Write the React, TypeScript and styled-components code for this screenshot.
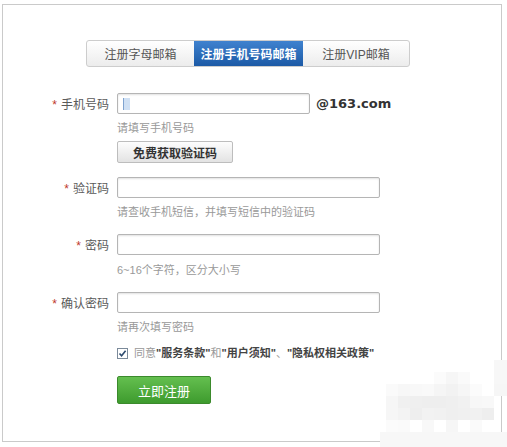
import React from "react";
import styled, { createGlobalStyle } from "styled-components";

const Global = createGlobalStyle`
  html, body { margin: 0; padding: 0; background: #fff; }
  body { font-family: "Liberation Sans", "Noto Sans CJK SC", sans-serif; font-size: 12px; color: #555; }
  * { box-sizing: border-box; }
`;

const Page = styled.div`
  position: relative;
  width: 507px;
  height: 447px;
  padding: 4px 5px 0 2px;
  background: #fff;
`;

const Frame = styled.div`
  height: 438px;
  border: 1px solid #cacaca;
  padding-top: 35px;
`;

const Tabs = styled.div`
  display: flex;
  width: 324px;
  height: 27px;
  margin-left: 83px;
  border: 1px solid #cdcdcd;
  border-radius: 3px;
  background: linear-gradient(#ffffff, #ececec);
  overflow: hidden;
`;

const Tab = styled.div<{ $active?: boolean; $w: number }>`
  width: ${(p) => p.$w}px;
  display: flex;
  align-items: center;
  justify-content: center;
  font-size: 12px;
  color: ${(p) => (p.$active ? "#fff" : "#555")};
  font-weight: ${(p) => (p.$active ? "bold" : "normal")};
  background: ${(p) => (p.$active ? "linear-gradient(#3f82cf, #1c5aa6)" : "transparent")};
`;

const Form = styled.div`
  margin-top: 26px;
`;

const Row = styled.div<{ $top: number }>`
  display: flex;
  align-items: center;
  margin-top: ${(p) => p.$top}px;
`;

const Label = styled.div`
  width: 106px;
  text-align: right;
  font-size: 12px;
  color: #5a5a5a;
  margin-right: 8px;
`;

const Star = styled.span`
  color: #c0392b;
  margin-right: 4px;
`;

const Input = styled.div<{ $w: number }>`
  position: relative;
  width: ${(p) => p.$w}px;
  height: 21px;
  border: 1px solid #b5b5b5;
  border-radius: 2px;
  background: #fff;
  box-shadow: inset 0 1px 2px rgba(0, 0, 0, 0.12);
  display: flex;
  align-items: center;
  padding-left: 5px;
`;

const Caret = styled.span`
  width: 7px;
  height: 12px;
  background: #cfe0f4;
  border-left: 1px solid #7fa3d0;
`;

const Suffix = styled.span`
  margin-left: 6px;
  font-size: 13px;
  font-weight: bold;
  color: #333;
  font-family: "DejaVu Sans", "Liberation Sans", sans-serif;
`;

const Indented = styled.div<{ $top: number }>`
  margin-left: 114px;
  margin-top: ${(p) => p.$top}px;
`;

const Hint = styled.div`
  font-size: 11px;
  line-height: 16px;
  color: #999;
`;

const GrayButton = styled.div`
  width: 116px;
  height: 22px;
  border: 1px solid #bdbdbd;
  border-radius: 2px;
  background: linear-gradient(#fdfdfd, #e3e3e3);
  display: flex;
  align-items: center;
  justify-content: center;
  font-size: 12px;
  font-weight: bold;
  color: #333;
`;

const Agree = styled.div`
  display: flex;
  align-items: center;
  font-size: 11px;
  color: #999;
  line-height: 16px;
`;

const Check = styled.span`
  width: 11px;
  height: 11px;
  border: 1px solid #7b8a9a;
  background: #fff;
  margin-right: 6px;
  display: flex;
  align-items: center;
  justify-content: center;
`;

const Strong = styled.b`
  color: #444;
`;

const Submit = styled.div`
  width: 94px;
  height: 28px;
  border: 1px solid #3b8a2c;
  border-radius: 2px;
  background: linear-gradient(#64bf4f, #3e9b2e);
  color: #fff;
  font-size: 13px;
  display: flex;
  align-items: center;
  justify-content: center;
`;

const Mosaic = styled.svg`
  position: absolute;
  right: 0;
  bottom: 0;
`;

const blocks: [number, number, number, string][] = [
  [114, 0, 13, "#f7f7f7"],
  [114, 12, 13, "#f7f7f7"],
  [114, 24, 13, "#f6f6f6"],
  [54, 12, 12, "#fbfbfb"],
  [66, 12, 12, "#f6f6f6"],
  [78, 12, 12, "#fafafa"],
  [6, 24, 12, "#fafafa"],
  [18, 24, 12, "#f7f7f7"],
  [30, 24, 12, "#f8f8f8"],
  [42, 24, 12, "#f9f9f9"],
  [54, 24, 12, "#f5f5f5"],
  [66, 24, 12, "#f2f2f2"],
  [78, 24, 12, "#f6f6f6"],
  [90, 24, 12, "#fbfbfb"],
  [6, 36, 12, "#f6f6f6"],
  [18, 36, 12, "#f0f0f0"],
  [30, 36, 12, "#efefef"],
  [42, 36, 12, "#eeeeee"],
  [54, 36, 12, "#eeeeee"],
  [66, 36, 12, "#efefef"],
  [78, 36, 12, "#f1f1f1"],
  [90, 36, 12, "#f7f7f7"],
  [102, 36, 12, "#f8f8f8"],
  [6, 48, 12, "#f6f6f6"],
  [18, 48, 12, "#f3f3f3"],
  [30, 48, 12, "#eeeeee"],
  [42, 48, 12, "#f2f2f2"],
  [54, 48, 12, "#f1f1f1"],
  [66, 48, 12, "#efefef"],
  [78, 48, 12, "#f0f0f0"],
  [90, 48, 12, "#f1f1f1"],
  [102, 48, 12, "#eeeeee"],
  [6, 60, 12, "#fbfbfb"],
  [18, 60, 12, "#fafafa"],
  [42, 60, 12, "#f8f8f8"],
  [66, 60, 12, "#f6f6f6"],
  [90, 60, 12, "#fafafa"],
  [0, 72, 127, "#f7f7f7"],
];

export default function App() {
  return (
    <Page>
      <Global />
      <Frame>
        <Tabs>
          <Tab $w={107}>注册字母邮箱</Tab>
          <Tab $w={109} $active>注册手机号码邮箱</Tab>
          <Tab $w={106}>注册VIP邮箱</Tab>
        </Tabs>
        <Form>
          <Row $top={0}>
            <Label><Star>*</Star>手机号码</Label>
            <Input $w={193}><Caret /></Input>
            <Suffix>@163.com</Suffix>
          </Row>
          <Indented $top={6}><Hint>请填写手机号码</Hint></Indented>
          <Indented $top={5}><GrayButton>免费获取验证码</GrayButton></Indented>

          <Row $top={14}>
            <Label><Star>*</Star>验证码</Label>
            <Input $w={263} />
          </Row>
          <Indented $top={6}><Hint>请查收手机短信，并填写短信中的验证码</Hint></Indented>

          <Row $top={14}>
            <Label><Star>*</Star>密码</Label>
            <Input $w={263} />
          </Row>
          <Indented $top={7}><Hint>6~16个字符，区分大小写</Hint></Indented>

          <Row $top={14}>
            <Label><Star>*</Star>确认密码</Label>
            <Input $w={263} />
          </Row>
          <Indented $top={6}><Hint>请再次填写密码</Hint></Indented>

          <Indented $top={10}>
            <Agree>
              <Check>
                <svg width="9" height="9" viewBox="0 0 9 9">
                  <path d="M1.5 4.5 L3.6 6.8 L7.6 1.8" fill="none" stroke="#2c4a6e" strokeWidth="1.6" />
                </svg>
              </Check>
              同意<Strong>"服务条款"</Strong>和<Strong>"用户须知"</Strong>、<Strong>"隐私权相关政策"</Strong>
            </Agree>
          </Indented>
          <Indented $top={15}><Submit>立即注册</Submit></Indented>
        </Form>
      </Frame>
      <Mosaic width="127" height="87" viewBox="0 0 127 87">
        {blocks.map(([x, y, w, c], i) => (
          <rect key={i} x={x} y={y} width={w} height={y === 72 ? 15 : 12} fill={c} />
        ))}
      </Mosaic>
    </Page>
  );
}
